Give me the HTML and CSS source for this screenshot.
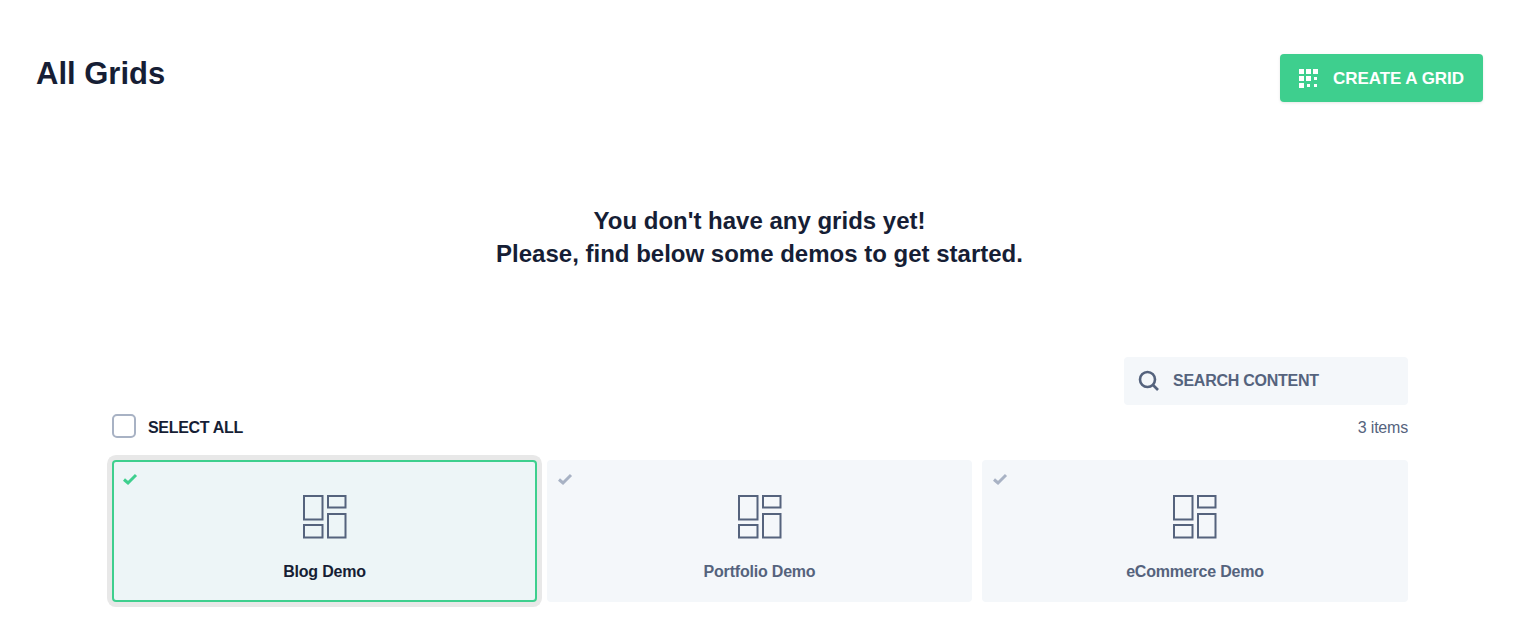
FILE: index.html
```html
<!DOCTYPE html>
<html lang="en">
<head>
  <meta charset="UTF-8" />
  <title>All Grids</title>
  <link rel="stylesheet" href="styles.css">
</head>
<body>
<div class="page">

  <!-- HEADER -->
  <div class="header">
    <h1>All Grids</h1>
    <button class="btn-create">
      <svg class="btn-icon" width="20" height="20" viewBox="0 0 20 20" fill="#fff">
        <rect x="0" y="0" width="5" height="5"/><rect x="7" y="0" width="5" height="5"/><rect x="14" y="0" width="5" height="5"/>
        <rect x="0" y="7" width="5" height="5"/><rect x="7" y="7" width="5" height="5"/><rect x="15" y="8" width="3" height="3"/>
        <rect x="0" y="14" width="5" height="5"/><rect x="8" y="15" width="3" height="3"/><rect x="15" y="15" width="3" height="3"/>
      </svg>
      CREATE A GRID
    </button>
  </div>

  <!-- EMPTY MESSAGE -->
  <div class="message">
    You don't have any grids yet!<br>
    Please, find below some demos to get started.
  </div>

  <!-- DEMOS -->
  <div class="demos">
    <div class="search-row">
      <div class="search">
        <svg width="22" height="22" viewBox="0 0 22 22" fill="none" stroke="#55637d" stroke-width="2.6">
          <circle cx="9.500" cy="9.500" r="7.500"/>
          <path d="M15 15L20 20"/>
        </svg>
        <span>SEARCH CONTENT</span>
      </div>
    </div>

    <div class="select-row">
      <label class="select-all"><span class="checkbox"></span><span class="select-label">SELECT ALL</span></label>
      <span class="count">3 items</span>
    </div>

    <div class="cards">
      <div class="card selected">
        <svg class="check" width="16" height="14" viewBox="0 0 16 14"><path d="M2 7.5L6 11L14 3" fill="none" stroke-width="3"/></svg>
        <svg class="grid-icon" width="44" height="44" viewBox="0 0 44 44" fill="none">
          <rect x="1" y="1" width="18.500" height="23.500"/><rect x="25" y="1" width="17.500" height="11.500"/>
          <rect x="1" y="30" width="18.500" height="12.500"/><rect x="25" y="19" width="17.500" height="23.500"/>
        </svg>
        <div class="card-name">Blog Demo</div>
      </div>
      <div class="card">
        <svg class="check" width="16" height="14" viewBox="0 0 16 14"><path d="M2 7.5L6 11L14 3" fill="none" stroke-width="3"/></svg>
        <svg class="grid-icon" width="44" height="44" viewBox="0 0 44 44" fill="none">
          <rect x="1" y="1" width="18.500" height="23.500"/><rect x="25" y="1" width="17.500" height="11.500"/>
          <rect x="1" y="30" width="18.500" height="12.500"/><rect x="25" y="19" width="17.500" height="23.500"/>
        </svg>
        <div class="card-name">Portfolio Demo</div>
      </div>
      <div class="card">
        <svg class="check" width="16" height="14" viewBox="0 0 16 14"><path d="M2 7.5L6 11L14 3" fill="none" stroke-width="3"/></svg>
        <svg class="grid-icon" width="44" height="44" viewBox="0 0 44 44" fill="none">
          <rect x="1" y="1" width="18.500" height="23.500"/><rect x="25" y="1" width="17.500" height="11.500"/>
          <rect x="1" y="30" width="18.500" height="12.500"/><rect x="25" y="19" width="17.500" height="23.500"/>
        </svg>
        <div class="card-name">eCommerce Demo</div>
      </div>
    </div>
  </div>

</div>
</body>
</html>
```

FILE: styles.css
```css
* { box-sizing: border-box; margin: 0; padding: 0; }
body {
  font-family: "Liberation Sans", Arial, sans-serif;
  background: #fff;
  color: #161e35;
}
.page { padding: 54px 35px 16px 36px; }

/* HEADER */
.header {
  display: flex;
  justify-content: space-between;
  align-items: flex-start;
}
.header h1 {
  font-size: 31px;
  font-weight: 700;
  line-height: 40px;
  color: #161e35;
}
.btn-create {
  display: flex;
  align-items: center;
  gap: 14px;
  width: 203px;
  height: 48px;
  padding: 2px 0 0 19px;
  font-family: inherit;
  font-size: 17px;
  font-weight: 700;
  letter-spacing: -0.05px;
  color: #fff;
  background: #3ecf8e;
  border: none;
  border-radius: 4px;
  box-shadow: 0 1px 3px rgba(0, 0, 0, .1);
}

/* MESSAGE */
.message {
  margin-top: 102px;
  text-align: center;
  font-size: 24px;
  font-weight: 700;
  line-height: 33px;
  color: #161e35;
}

/* DEMOS */
.demos { margin: 87px 75px 0 76px; }
.search-row { display: flex; justify-content: flex-end; }
.search {
  display: flex;
  align-items: center;
  gap: 13px;
  width: 284px;
  height: 48px;
  padding-left: 14px;
  background: #f4f7fa;
  border-radius: 4px;
  font-size: 16px;
  font-weight: 700;
  letter-spacing: -0.25px;
  color: #55637d;
}
.select-row {
  display: flex;
  justify-content: space-between;
  align-items: center;
  margin-top: 9px;
  height: 24px;
}
.select-all {
  display: flex;
  align-items: center;
  gap: 12px;
  font-size: 16px;
  font-weight: 700;
  letter-spacing: -0.3px;
  color: #161e35;
}
.select-label { padding-top: 4px; }
.checkbox {
  width: 24px;
  height: 24px;
  border: 2px solid #a8b2c4;
  border-radius: 5px;
}
.count {
  padding-top: 4px;
  font-size: 16px;
  letter-spacing: -0.2px;
  color: #55637d;
}

/* CARDS */
.cards {
  display: grid;
  grid-template-columns: 425px 425px 1fr;
  gap: 10px;
  margin-top: 22px;
}
.card {
  position: relative;
  display: flex;
  flex-direction: column;
  align-items: center;
  height: 142px;
  padding-top: 35px;
  background: #f4f7fa;
  border-radius: 4px;
}
.card.selected {
  background: #edf5f7;
  box-shadow: inset 0 0 0 2px #3ecf8e, 0 0 0 5px #e8e8e8;
}
.check {
  position: absolute;
  top: 12px;
  left: 10px;
  stroke: #a8b2c4;
}
.card.selected .check { stroke: #3ecf8e; }
.grid-icon { stroke: #55637d; stroke-width: 2; }
.card-name {
  margin-top: 23px;
  font-size: 16px;
  font-weight: 700;
  line-height: 20px;
  letter-spacing: -0.2px;
  color: #55637d;
}
.card.selected .card-name { color: #161e35; }
```
